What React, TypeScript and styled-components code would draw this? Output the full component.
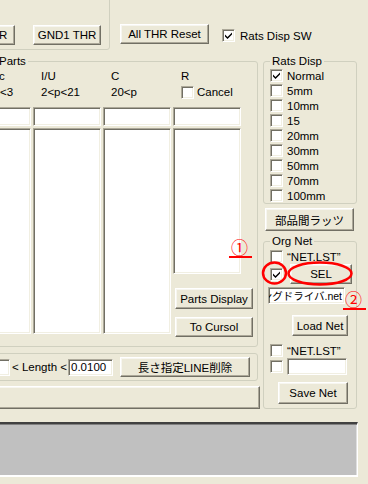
import styled, { createGlobalStyle, css } from "styled-components";

const GlobalStyle = createGlobalStyle`
  html, body {
    margin: 0;
    padding: 0;
    background: #ece9d8;
  }
  * {
    box-sizing: border-box;
  }
`;

const raised = css`
  border: 1px solid;
  border-color: #fff #716f64 #716f64 #fff;
  box-shadow: inset -1px -1px 0 #aca899, inset 1px 1px 0 #f7f6f0;
`;

const sunken = css`
  border: 1px solid;
  border-color: #aca899 #fff #fff #aca899;
  box-shadow: inset 1px 1px 0 #716f64, inset -1px -1px 0 #f1efe2;
  background: #fff;
`;

const Window = styled.div`
  position: relative;
  display: flex;
  flex-direction: column;
  width: 368px;
  height: 484px;
  overflow: hidden;
  background: #ece9d8;
  color: #000;
  font-family: "Liberation Sans", "Noto Sans CJK JP", sans-serif;
  font-size: 11.5px;
`;

const TopRow = styled.div`
  display: flex;
  align-items: flex-start;
  height: 50px;
  flex-shrink: 0;
`;

const ThresholdGroup = styled.div`
  display: flex;
  gap: 18px;
  width: 190px;
  height: 60px;
  margin: -10px 0 0 -80px;
  padding: 34px 0 0 26px;
  border: 1px solid #d0d0bf;
  border-radius: 3px;
  flex-shrink: 0;
`;

const Button = styled.button<{ $w: number; $h?: number }>`
  ${raised}
  width: ${(p) => p.$w}px;
  height: ${(p) => p.$h ?? 20}px;
  padding: 0;
  flex-shrink: 0;
  background: #ece9d8;
  font: inherit;
  color: #000;
  white-space: nowrap;
  overflow: hidden;
`;

const ThrButton = styled(Button)<{ $pr?: number }>`
  padding-right: ${(p) => p.$pr ?? 0}px;
`;

const ResetButton = styled(Button)`
  margin: 24px 0 0 10px;
`;

const CheckRow = styled.div<{ $h?: number }>`
  display: flex;
  align-items: center;
  gap: 4px;
  height: ${(p) => p.$h ?? 15}px;
  white-space: nowrap;
`;

const SwitchRow = styled(CheckRow)`
  margin: 28px 0 0 13px;
  gap: 5px;
`;

const Box = styled.span`
  ${sunken}
  display: inline-flex;
  align-items: center;
  justify-content: center;
  width: 13px;
  height: 13px;
  flex-shrink: 0;
`;

const Check = ({ on }: { on?: boolean }) => (
  <Box>
    {on && (
      <svg width="7" height="7" viewBox="0 0 7 7">
        <path d="M0 2.5 L2.5 5 L7 0.5 L7 2.5 L2.5 7 L0 4.5 Z" fill="#000" />
      </svg>
    )}
  </Box>
);

const MainRow = styled.div`
  display: flex;
  align-items: flex-start;
  margin-top: 4px;
  flex-shrink: 0;
`;

const LeftCol = styled.div`
  display: flex;
  flex-direction: column;
  width: 305px;
  margin-left: -45px;
  flex-shrink: 0;
`;

const RightCol = styled.div`
  display: flex;
  flex-direction: column;
  width: 94px;
  margin-left: 3px;
  flex-shrink: 0;
`;

const Group = styled.fieldset`
  margin: 0;
  padding: 0;
  min-width: 0;
  border: 1px solid #d0d0bf;
  border-radius: 3px;
`;

const Legend = styled.legend<{ $ml: number }>`
  margin-left: ${(p) => p.$ml}px;
  padding: 0 2px;
  line-height: 14px;
`;

const PartsGroup = styled(Group)`
  width: 303px;
  padding: 0 0 9px 7px;
`;

const Columns = styled.div`
  display: flex;
  gap: 2px;
`;

const Column = styled.div`
  display: flex;
  flex-direction: column;
  width: 68px;
  flex-shrink: 0;
`;

const HeadCell = styled.div`
  display: flex;
  align-items: center;
  gap: 3px;
  height: 16px;
  padding-left: 8px;
  white-space: nowrap;
`;

const FilterBox = styled.div`
  ${sunken}
  height: 19px;
  margin-top: 7px;
`;

const PartList = styled.div<{ $h: number }>`
  ${sunken}
  height: ${(p) => p.$h}px;
  margin-top: 2px;
`;

const DisplayButton = styled(Button)`
  margin: 14px 0 0 2px;
`;

const CursolButton = styled(Button)`
  margin: 8px 0 0 2px;
`;

const LengthGroup = styled.div`
  display: flex;
  align-items: center;
  width: 303px;
  height: 28px;
  margin-top: 6px;
  padding-left: 9px;
  border: 1px solid #d0d0bf;
  border-radius: 3px;
`;

const TextBox = styled.div<{ $w: number; $h?: number }>`
  ${sunken}
  display: flex;
  align-items: center;
  width: ${(p) => p.$w}px;
  height: ${(p) => p.$h ?? 17}px;
  padding: 0 2px;
  flex-shrink: 0;
  white-space: nowrap;
  overflow: hidden;
`;

const LengthLabel = styled.span`
  margin: 0 1px 0 2px;
  white-space: nowrap;
`;

const DeleteButton = styled(Button)`
  margin-left: 7px;
`;

const WideBar = styled.div`
  ${raised}
  width: 305px;
  height: 23px;
  margin-top: 5px;
  background: #ece9d8;
`;

const RatsGroup = styled(Group)`
  width: 94px;
  padding: 0 0 0 6px;
`;

const LinkButton = styled(Button)`
  margin: 4px 0 0 2px;
`;

const OrgGroup = styled(Group)`
  width: 94px;
  margin-top: 3px;
  padding: 0 0 4px 6px;
`;

const NetRow = styled(CheckRow)`
  margin-top: 1px;
`;

const SelButton = styled(Button)`
  margin-left: 3px;
`;

const NetFile = styled(TextBox)`
  justify-content: flex-end;
  margin: 3px 0 0 -2px;
  font-size: 10.5px;
`;

const LoadButton = styled(Button)`
  margin: 11px 0 0 22px;
`;

const SaveListRow = styled(CheckRow)`
  margin-top: 7px;
`;

const SaveButton = styled(Button)`
  margin: 7px 0 0 8px;
`;

const BottomPanel = styled.div`
  width: 368px;
  height: 55px;
  margin: 13px 0 0 -10px;
  background: #c0c0c0;
  border-top: 2px solid #404040;
  border-right: 1px solid #fff;
  border-bottom: 2px solid #fff;
  box-shadow: inset 0 1px 0 #808080, inset -1px 0 0 #dfdfdf;
  flex-shrink: 0;
`;

const Marker = styled.span<{ $x: number; $y: number }>`
  position: absolute;
  left: ${(p) => p.$x}px;
  top: ${(p) => p.$y}px;
  width: 23px;
  padding-left: 2px;
  border-bottom: 2px solid #f00;
  color: #f00;
  font-family: "Noto Sans CJK JP", sans-serif;
  font-size: 17px;
  line-height: 18px;
`;

const Circles = styled.svg`
  position: absolute;
  left: 0;
  top: 0;
  pointer-events: none;
`;

const ratsSteps = ["Normal", "5mm", "10mm", "15", "20mm", "30mm", "50mm", "70mm", "100mm"];

const columns = [
  { name: "Plastic", range: "0.5<p<3" },
  { name: "I/U", range: "2<p<21" },
  { name: "C", range: "20<p" },
];

export default function App() {
  return (
    <Window>
      <GlobalStyle />
      <TopRow>
        <ThresholdGroup>
          <ThrButton $w={68} $pr={6}>
            GND0 THR
          </ThrButton>
          <ThrButton $w={68}>GND1 THR</ThrButton>
        </ThresholdGroup>
        <ResetButton $w={89}>All THR Reset</ResetButton>
        <SwitchRow>
          <Check on />
          Rats Disp SW
        </SwitchRow>
      </TopRow>

      <MainRow>
        <LeftCol>
          <PartsGroup>
            <Legend $ml={34}>Parts</Legend>
            <Columns>
              {columns.map((c) => (
                <Column key={c.name}>
                  <HeadCell>{c.name}</HeadCell>
                  <HeadCell>{c.range}</HeadCell>
                  <FilterBox />
                  <PartList $h={206} />
                </Column>
              ))}
              <Column>
                <HeadCell>R</HeadCell>
                <HeadCell>
                  <Check />
                  Cancel
                </HeadCell>
                <FilterBox />
                <PartList $h={146} />
                <DisplayButton $w={78} $h={21}>
                  Parts Display
                </DisplayButton>
                <CursolButton $w={78}>To Cursol</CursolButton>
              </Column>
            </Columns>
          </PartsGroup>

          <LengthGroup>
            <TextBox $w={45} />
            <LengthLabel>&lt; Length &lt;</LengthLabel>
            <TextBox $w={45}>0.0100</TextBox>
            <DeleteButton $w={130}>長さ指定LINE削除</DeleteButton>
          </LengthGroup>

          <WideBar />
        </LeftCol>

        <RightCol>
          <RatsGroup>
            <Legend $ml={0}>Rats Disp</Legend>
            {ratsSteps.map((s, i) => (
              <CheckRow key={s}>
                <Check on={i === 0} />
                {s}
              </CheckRow>
            ))}
          </RatsGroup>
          <LinkButton $w={89} $h={23}>
            部品間ラッツ
          </LinkButton>

          <OrgGroup>
            <Legend $ml={0}>Org Net</Legend>
            <NetRow>
              <Check />
              “NET.LST”
            </NetRow>
            <CheckRow $h={20}>
              <Check on />
              <SelButton $w={62}>SEL</SelButton>
            </CheckRow>
            <NetFile $w={77}>ロジアナロングドライバ.net</NetFile>
            <LoadButton $w={56} $h={21}>
              Load Net
            </LoadButton>
            <SaveListRow>
              <Check />
              “NET.LST”
            </SaveListRow>
            <CheckRow $h={17}>
              <Check />
              <TextBox $w={60} />
            </CheckRow>
            <SaveButton $w={70} $h={22}>
              Save Net
            </SaveButton>
          </OrgGroup>
        </RightCol>
      </MainRow>

      <BottomPanel />

      <Marker $x={229} $y={238}>①</Marker>
      <Marker $x={343} $y={290}>②</Marker>
      <Circles width="368" height="484" viewBox="0 0 368 484">
        <ellipse cx="274.5" cy="273" rx="11.5" ry="10.5" fill="none" stroke="#f00" strokeWidth="2.5" />
        <ellipse cx="320" cy="273.5" rx="31.5" ry="11" fill="none" stroke="#f00" strokeWidth="2.5" />
      </Circles>
    </Window>
  );
}
